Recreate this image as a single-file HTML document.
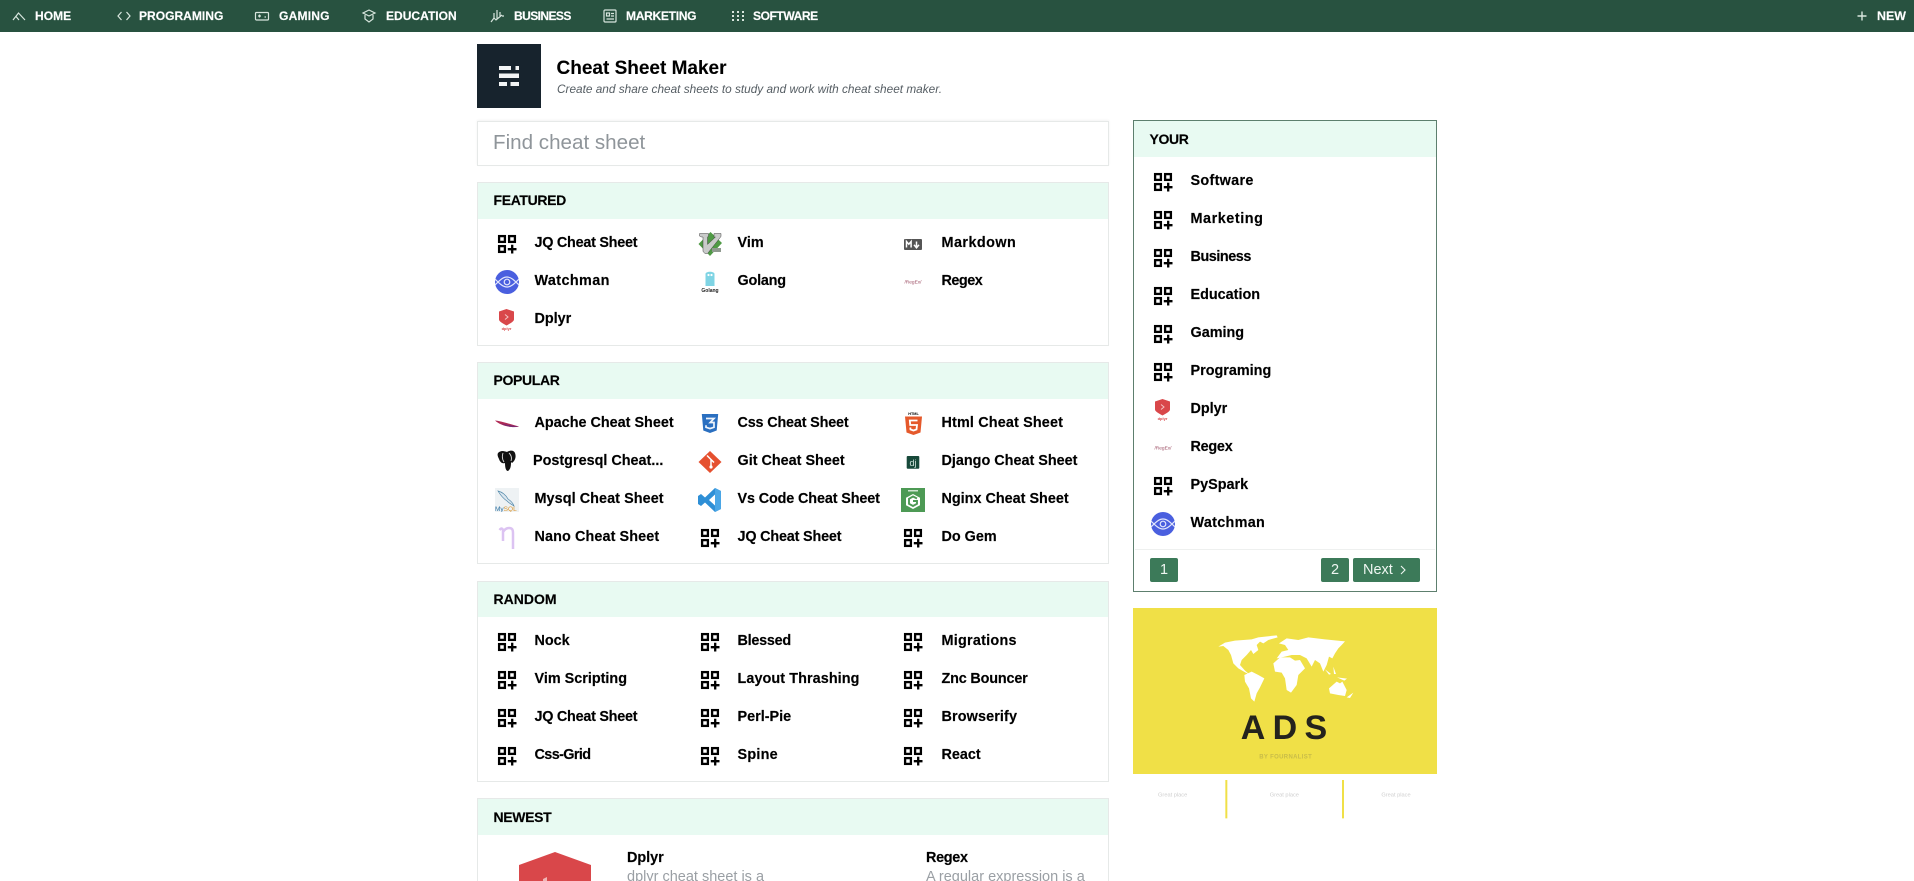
<!DOCTYPE html>
<html lang="en"><head><meta charset="utf-8"><title>Cheat Sheet Maker</title>
<style>
html,body{margin:0;padding:0;background:#fff;width:1914px;height:881px;overflow:hidden;font-family:"Liberation Sans",Arial,sans-serif;color:#000}
#r{position:relative;width:1914px;height:881px;overflow:hidden}
#r>*{position:absolute}
.nav{left:0;top:0;width:1914px;height:32px;background:#285240}
.n{top:6px;line-height:20px;font-size:12.05px;font-weight:700;color:#fff;white-space:nowrap;-webkit-text-stroke:.15px #fff}
.ni{top:8px;width:16px;height:16px;fill:none;stroke:#d8e6de;stroke-width:1.2}
.p{box-sizing:border-box;left:477px;width:632px;border:1px solid #e6e9e8;background:#fff}
.h{box-sizing:border-box;background:#e8faf2}
.ht{font-size:14px;font-weight:700;line-height:20px;left:493.5px;letter-spacing:-.35px;white-space:nowrap;-webkit-text-stroke:.15px #000}
.t{font-size:14.4px;font-weight:700;line-height:20px;white-space:nowrap;margin-top:1px;-webkit-text-stroke:.15px #000}
.i{width:24px;height:24px}
.b{background:#3c7a59;color:#eef6f1;font-size:14.5px;line-height:24px;height:24px;text-align:center;border-radius:2px}
.d{font-size:14.5px;line-height:20px;color:#9a9fa4;white-space:nowrap}
</style></head><body>
<svg width="0" height="0" style="position:absolute">
<defs>
<symbol id="q" viewBox="0 0 24 24"><g fill="none" stroke="#000" stroke-width="2.3"><rect x="4.100" y="4.100" width="5.800" height="5.800"/><rect x="14.100" y="4.100" width="5.800" height="5.800"/><rect x="4.100" y="14.100" width="5.800" height="5.800"/><path d="M17.200 12.800v8.700M12.800 17.200h8.700"/></g></symbol>
<symbol id="w" viewBox="0 0 24 24"><circle cx="12" cy="12" r="12" fill="#4a5fdf"/><g fill="none" stroke="#e3e7fc" stroke-width="1.200"><path d="M0 9C5 14 8 17 12 17S19 14 24 9M0 15C5 10 8 7 12 7S19 10 24 15"/><circle cx="12" cy="12" r="2.800"/></g></symbol>
<symbol id="dp" viewBox="0 0 24 24"><path d="M11.500 1L19 3.500V11.500C19 13.500 15 15.500 11.500 17.500 8 15.500 4 13.500 4 11.500V3.500Z" fill="#d9474a"/><path d="M10 6.500l3 2.500-3 2.500" fill="none" stroke="#f4c4c4" stroke-width="1"/><text x="11.500" y="22" font-size="4" font-weight="700" text-anchor="middle" fill="#d9474a" font-family="Liberation Sans">dplyr</text></symbol>
<symbol id="rg" viewBox="0 0 24 24"><text x="12" y="13.500" font-size="4.800" text-anchor="middle" fill="#9a4a60" font-family="Liberation Sans">/RegEx/</text></symbol>
<symbol id="vim" viewBox="0 0 24 24"><path d="M12.500 0L24 11 12 24 .5 12z" fill="#4f9a45"/><path d="M1.500 1.500h9v2.500l-1 1v7.500l8-7.500H16V1.500h7v3L9.500 21.500H7L5 19.500V5H3.500L1.500 4z" fill="#c9cbca" stroke="#444" stroke-width=".5"/><rect x="14" y="16" width="9" height="4" fill="#8f9a8f"/></symbol>
<symbol id="md" viewBox="0 0 24 24"><rect x="3" y="7" width="18" height="11" rx="1" fill="#555"/><path d="M5.500 15.500v-6l2.300 2.700 2.300-2.700v6M15.500 9.500v5M13 12.800l2.500 3 2.500-3" fill="none" stroke="#fff" stroke-width="1.500"/></symbol>
<symbol id="go" viewBox="0 0 24 24"><path d="M7.500 4c0-3 9-3 9 0v12H7.500z" fill="#7fd4e4"/><circle cx="10.500" cy="5" r="1.100" fill="#fff"/><circle cx="13.500" cy="5" r="1.100" fill="#fff"/><text x="12" y="22" font-size="5" font-weight="700" text-anchor="middle" font-family="Liberation Sans" fill="#222">Golang</text></symbol>
<symbol id="ap" viewBox="0 0 24 24"><path d="M0 8.500C6 9 18 13 24 14.500 16 16 6 14 0 8.500z" fill="#b02a55"/><path d="M6 11.500c6 1 13 2.500 18 3-6 1.500-13 0-18-3z" fill="#7a2a70"/></symbol>
<symbol id="css" viewBox="0 0 24 24"><path d="M3.800 2h16.400l-1.500 16.500L12 21l-6.700-2.500z" fill="#2a6fc0"/><path d="M8 6.500h8l-3.800 4H16v4.800l-4 1.300-4-1.300v-2" fill="none" stroke="#eef4fb" stroke-width="1.700"/></symbol>
<symbol id="ht" viewBox="0 0 24 24"><text x="12.500" y="2.800" font-size="3.800" font-weight="700" text-anchor="middle" font-family="Liberation Sans">HTML</text><path d="M4 4.500h17l-1.500 16-7 2.500-7-2.500z" fill="#e5592b"/><path d="M16.500 8.500H8.800l.4 4.500h6.800l-.5 4.500-3 1-3-1-.2-2" fill="none" stroke="#fff" stroke-width="1.800"/></symbol>
<symbol id="pg" viewBox="0 0 24 24"><path d="M3 3c3-3 6-2 9-1 3-2 7-2 8 1 1.500 4 0 8-3 10l-1-1c0 3 0 7-3 9-2 0-3-3-3-8-3 1-5-1-6-4-1-2-2-4-1-6z" fill="#111"/><path d="M8 3c-1 3-1 6 1 9M14 3c2 2 3 5 2 8" fill="none" stroke="#ddd" stroke-width=".9"/></symbol>
<symbol id="git" viewBox="0 0 24 24"><path d="M12 1l11.500 11L12 23 .5 12z" fill="#e5502f"/><path d="M9 5.500l4 4v7.500M13 9.500l3 3" fill="none" stroke="#fff" stroke-width="1.500"/><circle cx="13" cy="17" r="1.600" fill="#fff"/></symbol>
<symbol id="dj" viewBox="0 0 24 24"><rect x="5.700" y="6" width="12.600" height="12.700" rx="1" fill="#17493a"/><text x="12" y="16" font-size="9" text-anchor="middle" font-family="Liberation Sans" fill="#cfe3da">dj</text></symbol>
<symbol id="my" viewBox="0 0 24 24"><rect width="24" height="24" fill="#eef2f4"/><path d="M3 3c4 1 8 4 10 8 3 2 5 4 6 7-3-2-5-3-7-5C9 11 6 8 3 3z" fill="#dbe6ee" stroke="#4e86a8" stroke-width=".7"/><text x="0" y="23" font-size="6.500" font-family="Liberation Sans" fill="#2a6e9e">My<tspan fill="#d9932c">SQL</tspan></text></symbol>
<symbol id="vs" viewBox="0 0 24 24"><path d="M17 0l6 3v18l-6 3-10-9.500L3 18l-3-2V8l3-2 4 3.500zM17 6.500L11 12l6 5.500z" fill="#2e8fd6"/><path d="M17 0l6 3v18l-6 3z" fill="#4aa6e6"/></symbol>
<symbol id="ng" viewBox="0 0 24 24"><rect width="24" height="24" fill="#4d9a55"/><path d="M12 6l7 3.800v7.400L12 21l-7-3.800V9.800z" fill="#fff"/><path d="M16 10.500l-4-2-4 2.300v5l4 2.200 4-2.200V13h-4" fill="none" stroke="#4d9a55" stroke-width="1.900"/><rect x="7" y="2" width="10" height="1.500" fill="#cfe6d2"/></symbol>
<symbol id="na" viewBox="0 0 24 24"><path d="M4.500 4c2-2.500 3.500-1.500 3.500 1v10M8 6c1.500-2.500 3.500-4 6-4 3.500 0 4 2 4 5.500V23" fill="none" stroke="#dcc3f2" stroke-width="2.500"/></symbol>
</defs></svg>
<div id="r">
<div class="nav"></div>
<svg class="ni" style="left:11px" viewBox="0 0 16 16"><path d="M2 12L7.500 5 14 12M5 8.500L8 12"/></svg><div class="n" style="left:35px">HOME</div>
<svg class="ni" style="left:116px" viewBox="0 0 16 16"><path d="M5.500 4L2 8l3.500 4M10.500 4L14 8l-3.500 4"/></svg><div class="n" style="left:139px">PROGRAMING</div>
<svg class="ni" style="left:254px" viewBox="0 0 16 16"><rect x="1.500" y="4.500" width="13" height="7.500" rx="1"/><path d="M4 8h3M5.500 6.500v3M10.500 9h1.500"/></svg><div class="n" style="left:279px;letter-spacing:.2px">GAMING</div>
<svg class="ni" style="left:361px" viewBox="0 0 16 16"><path d="M8 2l6 3-6 3-6-3zM4 7v4l4 3 4-3V7"/></svg><div class="n" style="left:386px">EDUCATION</div>
<svg class="ni" style="left:489px" viewBox="0 0 16 16"><path d="M2 14l3-4 2 2 6-5M5 5v5M8 2v9M11 4v4M13 8h2"/></svg><div class="n" style="left:514px;letter-spacing:-.6px">BUSINESS</div>
<svg class="ni" style="left:602px" viewBox="0 0 16 16"><rect x="2" y="2" width="12" height="12" rx="1"/><rect x="4.500" y="5" width="3" height="3"/><path d="M9 5.500h3M9 8h3M4.500 11h7.500"/></svg><div class="n" style="left:626px;letter-spacing:-.3px">MARKETING</div>
<svg class="ni" style="left:730px;stroke:none;fill:#d8e6de" viewBox="0 0 16 16"><path d="M2 3h2v2H2zM7 3h2v2H7zM12 3h2v2h-2zM2 7h2v2H2zM7 7h2v2H7zM12 7h2v2h-2zM2 11h2v2H2zM7 11h2v2H7zM12 11h2v2h-2z"/></svg><div class="n" style="left:753px;letter-spacing:-.45px">SOFTWARE</div>
<svg class="ni" style="left:1854px" viewBox="0 0 16 16"><path d="M8 3.500v9M3.500 8h9" stroke-width="1.400"/></svg><div class="n" style="left:1877px;font-size:12.400px">NEW</div>

<div style="left:477px;top:44px;width:64px;height:64px;background:#17232d"></div>
<svg style="left:477px;top:44px" width="64" height="64" viewBox="0 0 64 64" fill="#f2f4f5"><path d="M22 22h12v4H22zM38.500 22h3.500v4h-3.500zM22 29.500h20v4.500H22zM22 38h8v4h-8zM33.500 38h8.500v4h-8.500z"/></svg>
<div style="left:556.500px;top:58px;font-size:19px;font-weight:700;line-height:22px;white-space:nowrap;-webkit-text-stroke:.1px #000">Cheat Sheet Maker</div>
<div style="left:557px;top:80px;font-size:11.820px;font-style:italic;color:#555d63;line-height:18px;white-space:nowrap">Create and share cheat sheets to study and work with cheat sheet maker.</div>

<div class="p" style="top:121px;height:45px;box-shadow:0 -1px 2px rgba(0,0,0,.05)"></div>
<div style="left:493px;top:131px;font-size:20.600px;line-height:24px;color:#8f959a">Find cheat sheet</div>

<div class="p" style="top:182px;height:164px"></div><div class="h" style="left:478px;top:183px;width:630px;height:36px"></div>
<div class="ht" style="top:190px">FEATURED</div>
<div class="p" style="top:362px;height:202px"></div><div class="h" style="left:478px;top:363px;width:630px;height:36px"></div>
<div class="ht" style="top:370px">POPULAR</div>
<div class="p" style="top:581px;height:201px"></div><div class="h" style="left:478px;top:582px;width:630px;height:35px"></div>
<div class="ht" style="top:589px;letter-spacing:0">RANDOM</div>
<div class="p" style="top:798px;height:100px"></div><div class="h" style="left:478px;top:799px;width:630px;height:36px"></div>
<div class="ht" style="top:807px">NEWEST</div>

<svg class="i" style="left:495px;top:232px"><use href="#q"/></svg><div class="t" style="left:534.500px;top:232px;letter-spacing:-.26px">JQ Cheat Sheet</div>
<svg class="i" style="left:698px;top:232px"><use href="#vim"/></svg><div class="t" style="left:737.500px;top:232px">Vim</div>
<svg class="i" style="left:901px;top:232px"><use href="#md"/></svg><div class="t" style="left:941.500px;top:232px;letter-spacing:.45px">Markdown</div>
<svg class="i" style="left:495px;top:270px"><use href="#w"/></svg><div class="t" style="left:534.500px;top:270px;letter-spacing:.38px">Watchman</div>
<svg class="i" style="left:698px;top:270px"><use href="#go"/></svg><div class="t" style="left:737.500px;top:270px;letter-spacing:-.2px">Golang</div>
<svg class="i" style="left:901px;top:270px"><use href="#rg"/></svg><div class="t" style="left:941.500px;top:270px;letter-spacing:-.49px">Regex</div>
<svg class="i" style="left:495px;top:308px"><use href="#dp"/></svg><div class="t" style="left:534.500px;top:308px">Dplyr</div>

<svg class="i" style="left:495px;top:412px"><use href="#ap"/></svg><div class="t" style="left:534.500px;top:412px">Apache Cheat Sheet</div>
<svg class="i" style="left:698px;top:412px"><use href="#css"/></svg><div class="t" style="left:737.500px;top:412px;letter-spacing:-.17px">Css Cheat Sheet</div>
<svg class="i" style="left:901px;top:412px"><use href="#ht"/></svg><div class="t" style="left:941.500px;top:412px;letter-spacing:.15px">Html Cheat Sheet</div>
<svg class="i" style="left:495px;top:450px"><use href="#pg"/></svg><div class="t" style="left:533px;top:450px">Postgresql Cheat...</div>
<svg class="i" style="left:698px;top:450px"><use href="#git"/></svg><div class="t" style="left:737.500px;top:450px">Git Cheat Sheet</div>
<svg class="i" style="left:901px;top:450px"><use href="#dj"/></svg><div class="t" style="left:941.500px;top:450px">Django Cheat Sheet</div>
<svg class="i" style="left:495px;top:488px"><use href="#my"/></svg><div class="t" style="left:534.500px;top:488px;letter-spacing:.07px">Mysql Cheat Sheet</div>
<svg class="i" style="left:698px;top:488px"><use href="#vs"/></svg><div class="t" style="left:737.500px;top:488px;letter-spacing:-.13px">Vs Code Cheat Sheet</div>
<svg class="i" style="left:901px;top:488px"><use href="#ng"/></svg><div class="t" style="left:941.500px;top:488px">Nginx Cheat Sheet</div>
<svg class="i" style="left:495px;top:526px"><use href="#na"/></svg><div class="t" style="left:534.500px;top:526px;letter-spacing:.1px">Nano Cheat Sheet</div>
<svg class="i" style="left:698px;top:526px"><use href="#q"/></svg><div class="t" style="left:737.500px;top:526px;letter-spacing:-.18px">JQ Cheat Sheet</div>
<svg class="i" style="left:901px;top:526px"><use href="#q"/></svg><div class="t" style="left:941.500px;top:526px">Do Gem</div>

<svg class="i" style="left:495px;top:630px"><use href="#q"/></svg><div class="t" style="left:534.500px;top:630px">Nock</div>
<svg class="i" style="left:698px;top:630px"><use href="#q"/></svg><div class="t" style="left:737.500px;top:630px;letter-spacing:-.26px">Blessed</div>
<svg class="i" style="left:901px;top:630px"><use href="#q"/></svg><div class="t" style="left:941.500px;top:630px;letter-spacing:.25px">Migrations</div>
<svg class="i" style="left:495px;top:668px"><use href="#q"/></svg><div class="t" style="left:534.500px;top:668px">Vim Scripting</div>
<svg class="i" style="left:698px;top:668px"><use href="#q"/></svg><div class="t" style="left:737.500px;top:668px;letter-spacing:.08px">Layout Thrashing</div>
<svg class="i" style="left:901px;top:668px"><use href="#q"/></svg><div class="t" style="left:941.500px;top:668px;letter-spacing:-.17px">Znc Bouncer</div>
<svg class="i" style="left:495px;top:706px"><use href="#q"/></svg><div class="t" style="left:534.500px;top:706px;letter-spacing:-.26px">JQ Cheat Sheet</div>
<svg class="i" style="left:698px;top:706px"><use href="#q"/></svg><div class="t" style="left:737.500px;top:706px">Perl-Pie</div>
<svg class="i" style="left:901px;top:706px"><use href="#q"/></svg><div class="t" style="left:941.500px;top:706px;letter-spacing:.12px">Browserify</div>
<svg class="i" style="left:495px;top:744px"><use href="#q"/></svg><div class="t" style="left:534.500px;top:744px;letter-spacing:-.6px">Css-Grid</div>
<svg class="i" style="left:698px;top:744px"><use href="#q"/></svg><div class="t" style="left:737.500px;top:744px;letter-spacing:.24px">Spine</div>
<svg class="i" style="left:901px;top:744px"><use href="#q"/></svg><div class="t" style="left:941.500px;top:744px">React</div>

<svg style="left:519px;top:852px" width="72" height="29" viewBox="0 0 72 29"><path d="M36 0l36 13v16H0V13z" fill="#d9474a"/><path d="M24 27l4-2v4h-4z" fill="#f0b5b5"/></svg>
<div class="t" style="left:627px;top:847px">Dplyr</div>
<div class="d" style="left:627px;top:867px">dplyr cheat sheet is a</div>
<div class="t" style="left:926px;top:847px;letter-spacing:-.3px">Regex</div>
<div class="d" style="left:926px;top:867px">A regular expression is a</div>

<div style="box-sizing:border-box;left:1133px;top:120px;width:304px;height:472px;border:1px solid #5d7f6e;background:#fff"></div>
<div class="h" style="left:1134px;top:121px;width:302px;height:36px"></div>
<div class="ht" style="left:1149.500px;top:129px">YOUR</div>
<svg class="i" style="left:1151px;top:170px"><use href="#q"/></svg><div class="t" style="left:1190.500px;top:170px;letter-spacing:.3px">Software</div>
<svg class="i" style="left:1151px;top:208px"><use href="#q"/></svg><div class="t" style="left:1190.500px;top:208px;letter-spacing:.55px">Marketing</div>
<svg class="i" style="left:1151px;top:246px"><use href="#q"/></svg><div class="t" style="left:1190.500px;top:246px;letter-spacing:-.45px">Business</div>
<svg class="i" style="left:1151px;top:284px"><use href="#q"/></svg><div class="t" style="left:1190.500px;top:284px">Education</div>
<svg class="i" style="left:1151px;top:322px"><use href="#q"/></svg><div class="t" style="left:1190.500px;top:322px">Gaming</div>
<svg class="i" style="left:1151px;top:360px"><use href="#q"/></svg><div class="t" style="left:1190.500px;top:360px">Programing</div>
<svg class="i" style="left:1151px;top:398px"><use href="#dp"/></svg><div class="t" style="left:1190.500px;top:398px">Dplyr</div>
<svg class="i" style="left:1151px;top:436px"><use href="#rg"/></svg><div class="t" style="left:1190.500px;top:436px;letter-spacing:-.25px">Regex</div>
<svg class="i" style="left:1151px;top:474px"><use href="#q"/></svg><div class="t" style="left:1190.500px;top:474px">PySpark</div>
<svg class="i" style="left:1151px;top:512px"><use href="#w"/></svg><div class="t" style="left:1190.500px;top:512px;letter-spacing:.3px">Watchman</div>
<div style="left:1135px;top:549px;width:300px;height:1px;background:#eef0ef"></div>
<div class="b" style="left:1150px;top:558px;width:28px">1</div>
<div class="b" style="left:1321px;top:558px;width:28px">2</div>
<div class="b" style="left:1353px;top:558px;width:67px;box-sizing:border-box;text-align:left;padding-left:10px">Next</div>
<svg style="left:1398px;top:565px" width="10" height="10" viewBox="0 0 10 10"><path d="M3 1l4 4-4 4" fill="none" stroke="#eef6f1" stroke-width="1.100"/></svg>

<div style="left:1133px;top:608px;width:304px;height:166px;background:#f0e047"></div>
<svg style="left:1125px;top:600px" width="330" height="230" viewBox="0 0 990 690">
<g fill="#fff">
<path d="M280 140L300 128 330 122 380 118 400 112 455 106 458 112 430 120 415 130 405 125 395 135 400 150 385 162 378 150 365 165 350 180 345 195 360 212 372 222 362 218 340 205 325 190 318 165 310 150 295 138Z"/>
<path d="M462 130L485 115 520 120 550 112 600 118 660 124 650 135 640 145 630 160 622 175 612 170 605 195 595 215 585 190 570 180 560 200 545 175 525 165 500 165 480 170 455 175 470 155 490 150 480 135Z"/>
<path d="M445 190L465 172 495 172 510 182 525 180 540 205 520 225 515 255 498 278 485 270 480 235 470 218 450 215Z"/>
<path d="M358 225L380 215 400 225 418 235 405 262 395 280 388 305 378 295 372 265 360 245Z"/>
<path d="M612 265L635 245 645 250 652 245 665 270 660 288 640 285 615 280Z"/>
<path d="M600 208l18 14-6 2zM625 200l8 22-6 0zM636 232l30 4-8 6zM665 292l20-14-10 16z"/>
</g>
<text x="488" y="417" font-family="Liberation Sans" font-size="102" font-weight="700" fill="#24231d" text-anchor="middle" letter-spacing="22">ADS</text>
<text x="482" y="476" font-family="Liberation Sans" font-size="18" font-weight="700" fill="#c8bc48" text-anchor="middle" letter-spacing="1">BY FOURNALIST</text>
<g font-family="Liberation Sans" font-size="17" fill="#cfcfcf" text-anchor="middle"><text x="143" y="590">Great place</text><text x="478" y="590">Great place</text><text x="813" y="590">Great place</text></g>
<path d="M304 540v115M654 540v115" stroke="#f0e047" stroke-width="6"/>
</svg>
</div>
</body></html>
